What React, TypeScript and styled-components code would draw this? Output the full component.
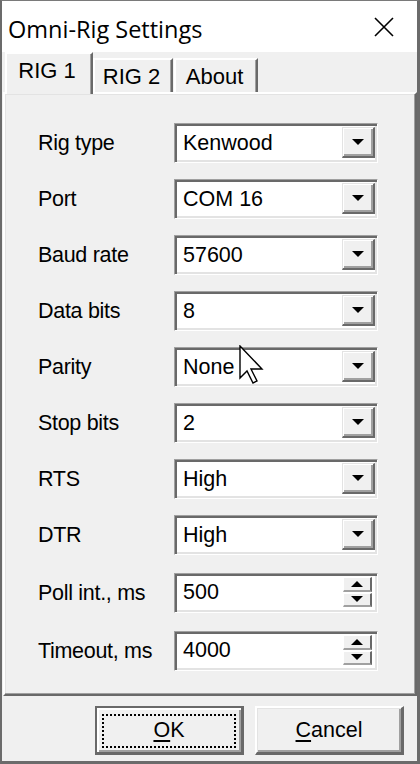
import styled, { createGlobalStyle } from 'styled-components'

type Field = {
  label: string
  value: string
  kind: 'combo' | 'spin'
}

const fields: Field[] = [
  { label: 'Rig type', value: 'Kenwood', kind: 'combo' },
  { label: 'Port', value: 'COM 16', kind: 'combo' },
  { label: 'Baud rate', value: '57600', kind: 'combo' },
  { label: 'Data bits', value: '8', kind: 'combo' },
  { label: 'Parity', value: 'None', kind: 'combo' },
  { label: 'Stop bits', value: '2', kind: 'combo' },
  { label: 'RTS', value: 'High', kind: 'combo' },
  { label: 'DTR', value: 'High', kind: 'combo' },
  { label: 'Poll int., ms', value: '500', kind: 'spin' },
  { label: 'Timeout, ms', value: '4000', kind: 'spin' },
]

const ArrowDown = () => (
  <svg width="12" height="6" viewBox="0 0 12 6">
    <polygon points="0,0 12,0 6,6" fill="#000" />
  </svg>
)

const ArrowUp = () => (
  <svg width="12" height="6" viewBox="0 0 12 6">
    <polygon points="0,6 12,6 6,0" fill="#000" />
  </svg>
)

const App = () => {
  return (
    <>
      <GlobalStyle />
      <StyledWindow>
        <StyledTitleBar>
          <StyledTitle>Omni-Rig Settings</StyledTitle>
          <StyledClose width="20" height="20" viewBox="0 0 20 20">
            <path d="M1 1 L19 19 M19 1 L1 19" stroke="#000" strokeWidth="1.6" />
          </StyledClose>
        </StyledTitleBar>
        <StyledBody>
          <StyledTabStrip>
            <StyledTab $active $width={88}>
              RIG 1
            </StyledTab>
            <StyledTab $width={80}>RIG 2</StyledTab>
            <StyledTab $width={84}>About</StyledTab>
          </StyledTabStrip>
          <StyledPanel>
            <StyledFieldList>
              {fields.map((field) => (
                <StyledRow key={field.label} $spin={field.kind === 'spin'}>
                  <StyledLabel>{field.label}</StyledLabel>
                  <StyledEditBox $spin={field.kind === 'spin'}>
                    <StyledValue>{field.value}</StyledValue>
                    {field.kind === 'combo' ? (
                      <StyledDropButton>
                        <ArrowDown />
                      </StyledDropButton>
                    ) : (
                      <StyledSpinColumn>
                        <StyledSpinButton>
                          <ArrowUp />
                        </StyledSpinButton>
                        <StyledSpinButton>
                          <ArrowDown />
                        </StyledSpinButton>
                      </StyledSpinColumn>
                    )}
                  </StyledEditBox>
                </StyledRow>
              ))}
            </StyledFieldList>
          </StyledPanel>
          <StyledFooter>
            <StyledButton $default>
              <StyledFocusRect>
                <u>O</u>K
              </StyledFocusRect>
            </StyledButton>
            <StyledButton>
              <u>C</u>ancel
            </StyledButton>
          </StyledFooter>
        </StyledBody>
        <StyledCursor width="26" height="40" viewBox="0 0 26 40">
          <polygon
            points="1,1 1,33 8,26 14,38 18,36 12,24 23,24"
            fill="#fff"
            stroke="#000"
            strokeWidth="1.4"
            strokeLinejoin="miter"
          />
        </StyledCursor>
      </StyledWindow>
    </>
  )
}

export default App

const GlobalStyle = createGlobalStyle`
  html, body {
    margin: 0;
    padding: 0;
    background: #6b6b6b;
  }
  * {
    box-sizing: border-box;
  }
`

const StyledWindow = styled.div`
  position: relative;
  width: 420px;
  height: 764px;
  display: flex;
  flex-direction: column;
  border-top: 1px solid #7a7a7a;
  border-left: 2px solid #6b6b6b;
  border-right: 3px solid #6b6b6b;
  border-bottom: 3px solid #6b6b6b;
  font-family: 'Liberation Sans', Arial, sans-serif;
  font-size: 21.5px;
  color: #000;
`

const StyledTitleBar = styled.div`
  height: 51px;
  flex-shrink: 0;
  display: flex;
  align-items: center;
  justify-content: space-between;
  padding: 0 23px 0 6px;
  background: #fff;
`

const StyledTitle = styled.div`
  font-family: 'Segoe UI', 'Open Sans', sans-serif;
  font-size: 23.5px;
  color: #000;
  margin-top: 4px;
`

const StyledClose = styled.svg`
  display: block;
  margin-top: 1px;
`

const StyledBody = styled.div`
  flex: 1;
  display: flex;
  flex-direction: column;
  background: #f0f0f0;
  padding-left: 1px;
`

const StyledTabStrip = styled.div`
  height: 40px;
  flex-shrink: 0;
  display: flex;
  align-items: flex-end;
  padding-left: 2px;
  font-size: 22px;
`

const StyledTab = styled.div<{ $active?: boolean; $width: number }>`
  position: relative;
  z-index: 1;
  width: ${(p) => p.$width}px;
  height: ${(p) => (p.$active ? 42 : 34)}px;
  margin-bottom: ${(p) => (p.$active ? -2 : 0)}px;
  margin-right: ${(p) => (p.$active ? 0 : 1)}px;
  display: flex;
  align-items: center;
  justify-content: center;
  padding: ${(p) => (p.$active ? '0 4px 6px 0' : '2px 3px 0 0')};
  background: #f0f0f0;
  border-top: 2px solid #fff;
  border-left: 2px solid #fff;
  border-right: 2px solid #696969;
  box-shadow: inset -1px 0 0 #a0a0a0;
  white-space: nowrap;
`

const StyledPanel = styled.div`
  height: 604px;
  flex-shrink: 0;
  border-top: 2px solid #fff;
  border-left: 2px solid #fff;
  border-right: 2px solid #696969;
  border-bottom: 2px solid #696969;
  box-shadow:
    inset -1px -1px 0 #a0a0a0,
    inset 1px 1px 0 #e3e3e3;
  padding: 29px 0 0 33px;
`

const StyledFieldList = styled.div`
  display: flex;
  flex-direction: column;
  gap: 16px;
`

const StyledRow = styled.div<{ $spin: boolean }>`
  display: flex;
  align-items: center;
  height: 40px;
  margin-top: ${(p) => (p.$spin ? 2 : 0)}px;
`

const StyledLabel = styled.div`
  width: 136px;
  white-space: nowrap;
  letter-spacing: -0.3px;
`

const StyledEditBox = styled.div<{ $spin: boolean }>`
  width: 204px;
  height: 40px;
  display: flex;
  align-items: stretch;
  background: #fff;
  border: 1px solid;
  border-color: #a0a0a0 #fff #fff #a0a0a0;
  box-shadow:
    inset 2px 2px 0 #696969,
    inset -2px -2px 0 #e3e3e3;
  padding: ${(p) => (p.$spin ? '3px 5px 5px 3px' : '3px 2px 4px 3px')};
`

const StyledValue = styled.div`
  flex: 1;
  display: flex;
  align-items: center;
  padding-left: 5px;
  padding-top: 1px;
`

const StyledDropButton = styled.div`
  width: 33px;
  display: flex;
  align-items: center;
  justify-content: center;
  background: #f0f0f0;
  border-top: 1px solid #e3e3e3;
  border-left: 1px solid #e3e3e3;
  border-right: 2px solid #696969;
  border-bottom: 2px solid #696969;
  box-shadow:
    inset 1px 1px 0 #fff,
    inset -2px -2px 0 #a0a0a0;
  padding: 0 1px 0 0;
`

const StyledSpinColumn = styled.div`
  width: 29px;
  display: flex;
  flex-direction: column;
  gap: 1px;
`

const StyledSpinButton = styled.div`
  flex: 1;
  display: flex;
  align-items: center;
  justify-content: center;
  background: #f0f0f0;
  border-top: 1px solid #fff;
  border-left: 1px solid #fff;
  border-right: 2px solid #696969;
  border-bottom: 2px solid #a0a0a0;
`

const StyledFooter = styled.div`
  flex: 1;
  display: flex;
  justify-content: flex-end;
  align-items: flex-start;
  gap: 11px;
  padding: 10px 13px 0 0;
`

const StyledButton = styled.div<{ $default?: boolean }>`
  width: 149px;
  height: 49px;
  display: flex;
  align-items: center;
  justify-content: center;
  background: #f0f0f0;
  border-top: ${(p) => (p.$default ? '2px solid #696969' : '2px solid #fff')};
  border-left: ${(p) => (p.$default ? '2px solid #696969' : '2px solid #fff')};
  border-right: 3px solid #696969;
  border-bottom: 3px solid #696969;
  box-shadow: ${(p) =>
    p.$default
      ? 'inset 2px 2px 0 #fff, inset -2px -2px 0 #a0a0a0'
      : 'inset 1px 1px 0 #e3e3e3, inset -2px -2px 0 #a0a0a0'};
  padding-top: 1px;
  u {
    text-decoration-thickness: 2px;
    text-underline-offset: 3px;
  }
`

const StyledFocusRect = styled.span`
  width: 134px;
  height: 34px;
  display: flex;
  align-items: center;
  justify-content: center;
  border: 2px dotted #000;
`

const StyledCursor = styled.svg`
  position: absolute;
  left: 237px;
  top: 344px;
  display: block;
`
